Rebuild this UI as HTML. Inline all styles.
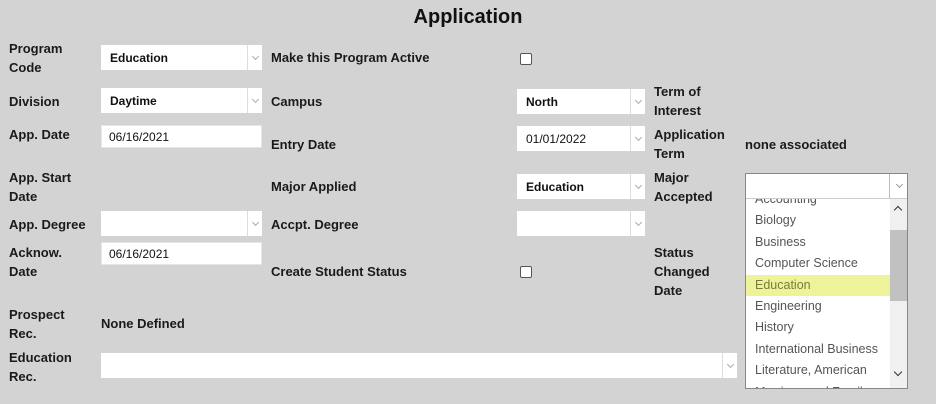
<!DOCTYPE html>
<html><head><style>
body{margin:0;width:936px;height:404px;background:#d3d3d3;font-family:"Liberation Sans",sans-serif;position:relative;overflow:hidden;color:#111}
.a{position:absolute}
.l{position:absolute;font-weight:bold;font-size:13px;line-height:19px;color:#1a1a1a}
.s{position:absolute;background:#fff;height:25px;font-size:12px;font-weight:bold;box-sizing:border-box;padding-left:9px;line-height:27px}
.s:after{content:"";position:absolute;right:0;top:0;width:14px;height:25px;border-left:1px solid #ddd}
.s i{position:absolute;right:4px;top:9px;width:4px;height:4px;border-right:1px solid #aaa;border-bottom:1px solid #aaa;transform:rotate(45deg)}
.in{position:absolute;background:#fff;height:23px;font-size:12px;box-sizing:border-box;padding-left:7px;line-height:23px;border:1px solid #e6e6e6}
.cb{position:absolute;width:10px;height:10px;border:1px solid #555;border-radius:2px;background:#fff}
.li{height:21.4px;line-height:21.4px;font-size:12.5px;color:#555;padding-left:9px}
</style></head><body>
<div class="a" style="left:0;width:936px;top:6px;text-align:center;font-size:20px;font-weight:bold;color:#111">Application</div>

<div class="l" style="left:9px;top:39px">Program<br>Code</div>
<div class="s" style="left:101px;top:45px;width:161px">Education<i></i></div>
<div class="l" style="left:271px;top:48px">Make this Program Active</div>
<div class="cb" style="left:520px;top:53px"></div>

<div class="l" style="left:9px;top:92px">Division</div>
<div class="s" style="left:101px;top:88px;width:161px">Daytime<i></i></div>
<div class="l" style="left:271px;top:92px">Campus</div>
<div class="s" style="left:517px;top:89px;width:128px">North<i></i></div>
<div class="l" style="left:654px;top:82px">Term of<br>Interest</div>

<div class="l" style="left:9px;top:125px">App. Date</div>
<div class="in" style="left:101px;top:125px;width:161px">06/16/2021</div>
<div class="l" style="left:271px;top:135px">Entry Date</div>
<div class="s" style="left:517px;top:126px;width:128px;font-weight:normal">01/01/2022<i></i></div>
<div class="l" style="left:654px;top:125px">Application<br>Term</div>
<div class="l" style="left:745px;top:135px">none associated</div>

<div class="l" style="left:9px;top:168px">App. Start<br>Date</div>
<div class="l" style="left:271px;top:177px">Major Applied</div>
<div class="s" style="left:517px;top:174px;width:128px">Education<i></i></div>
<div class="l" style="left:654px;top:168px">Major<br>Accepted</div>

<div class="l" style="left:9px;top:215px">App. Degree</div>
<div class="s" style="left:101px;top:211px;width:161px"><i></i></div>
<div class="l" style="left:271px;top:215px">Accpt. Degree</div>
<div class="s" style="left:517px;top:211px;width:128px"><i></i></div>

<div class="l" style="left:9px;top:243px">Acknow.<br>Date</div>
<div class="in" style="left:101px;top:242px;width:161px">06/16/2021</div>
<div class="l" style="left:271px;top:262px">Create Student Status</div>
<div class="cb" style="left:520px;top:266px"></div>
<div class="l" style="left:654px;top:243px">Status<br>Changed<br>Date</div>

<div class="l" style="left:9px;top:305px">Prospect<br>Rec.</div>
<div class="l" style="left:101px;top:314px">None Defined</div>

<div class="l" style="left:9px;top:348px">Education<br>Rec.</div>
<div class="s" style="left:101px;top:353px;width:636px"><i></i></div>

<div class="a" style="left:745px;top:173px;width:163px;height:216px;border:1px solid #888;box-sizing:border-box;background:#fff;overflow:hidden">
 <div style="position:absolute;left:0;top:15px;width:145px">
  <div class="li">Accounting</div><div class="li">Biology</div><div class="li">Business</div><div class="li">Computer Science</div>
  <div class="li" style="background:#eef39a;color:#7a7a3a">Education</div><div class="li">Engineering</div><div class="li">History</div><div class="li">International Business</div><div class="li">Literature, American</div><div class="li">Marriage and Family</div>
 </div>
 <div style="position:absolute;left:0;top:0;width:161px;height:24px;background:#fff;border-bottom:1px solid #ccc;z-index:2"><div style="position:absolute;right:0;top:0;width:17px;height:24px;border-left:1px solid #bbb"></div><i style="position:absolute;right:5px;top:8px;width:4px;height:4px;border-right:1px solid #999;border-bottom:1px solid #999;transform:rotate(45deg)"></i></div>
 <div style="position:absolute;right:0;top:25px;width:17px;height:190px;background:#f0f0f0;z-index:2"><div style="position:absolute;left:0;top:31px;width:17px;height:71px;background:#c1c1c1"></div>
 <div style="position:absolute;left:5px;top:8px;width:5px;height:5px;border-left:1.5px solid #333;border-top:1.5px solid #333;transform:rotate(45deg)"></div>
 <div style="position:absolute;left:5px;top:170px;width:5px;height:5px;border-right:1.5px solid #333;border-bottom:1.5px solid #333;transform:rotate(45deg)"></div></div>
</div>
</body></html>
